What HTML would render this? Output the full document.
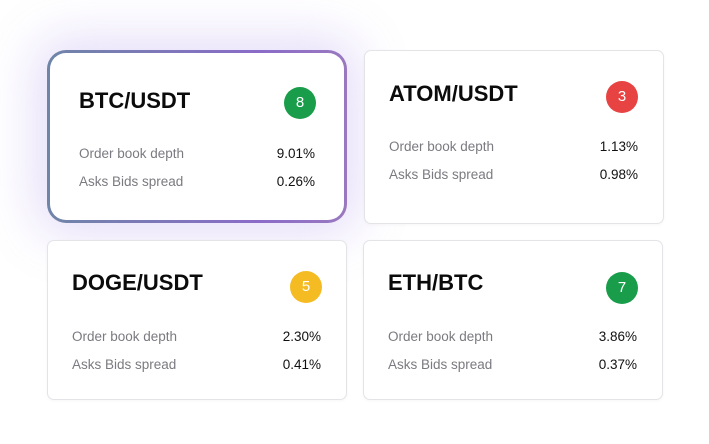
<!DOCTYPE html><html><head><style>
body{margin:0;width:709px;height:444px;background:#fff;font-family:"Liberation Sans",sans-serif;position:relative;overflow:hidden}
.c{position:absolute;box-sizing:border-box;background:#fff;border:1px solid #e4e4e8;border-radius:7px;box-shadow:0 1px 3px rgba(0,0,0,.04)}
.t{position:absolute;font-size:22px;font-weight:bold;color:#0b0b0b;letter-spacing:0}
.b{position:absolute;width:32px;height:32px;border-radius:50%;color:#fff;font-size:15px;text-align:center;line-height:32px}
.l{position:absolute;font-size:13.5px;color:#7a7a80}
.v{position:absolute;font-size:13.5px;color:#111;text-align:right;width:80px}
</style></head><body>
<div style="position:absolute;left:47px;top:50px;width:300px;height:173px;border-radius:19px;background:linear-gradient(90deg,#6f85a8,#8a6cc8 70%,#9a78c0);box-shadow:0 0 50px 12px rgba(150,120,230,.25)"></div>
<div style="position:absolute;left:50px;top:53px;width:294px;height:167px;border-radius:16px;background:#fff"></div>
<div class="c" style="left:364px;top:50px;width:300px;height:174px"></div>
<div class="c" style="left:47px;top:240px;width:300px;height:160px"></div>
<div class="c" style="left:363px;top:240px;width:300px;height:160px"></div>

<div class="t" style="left:79px;top:88px">BTC/USDT</div>
<div class="b" style="left:284px;top:87px;background:#1a9d4a">8</div>
<div class="l" style="left:79px;top:146px">Order book depth</div><div class="v" style="left:235px;top:146px">9.01%</div>
<div class="l" style="left:79px;top:174px">Asks Bids spread</div><div class="v" style="left:235px;top:174px">0.26%</div>

<div class="t" style="left:389px;top:81px">ATOM/USDT</div>
<div class="b" style="left:606px;top:81px;background:#e84343">3</div>
<div class="l" style="left:389px;top:139px">Order book depth</div><div class="v" style="left:558px;top:139px">1.13%</div>
<div class="l" style="left:389px;top:167px">Asks Bids spread</div><div class="v" style="left:558px;top:167px">0.98%</div>

<div class="t" style="left:72px;top:270px">DOGE/USDT</div>
<div class="b" style="left:290px;top:271px;background:#f5bb22">5</div>
<div class="l" style="left:72px;top:329px">Order book depth</div><div class="v" style="left:241px;top:329px">2.30%</div>
<div class="l" style="left:72px;top:357px">Asks Bids spread</div><div class="v" style="left:241px;top:357px">0.41%</div>

<div class="t" style="left:388px;top:270px">ETH/BTC</div>
<div class="b" style="left:606px;top:272px;background:#1a9d4a">7</div>
<div class="l" style="left:388px;top:329px">Order book depth</div><div class="v" style="left:557px;top:329px">3.86%</div>
<div class="l" style="left:388px;top:357px">Asks Bids spread</div><div class="v" style="left:557px;top:357px">0.37%</div>
</body></html>
